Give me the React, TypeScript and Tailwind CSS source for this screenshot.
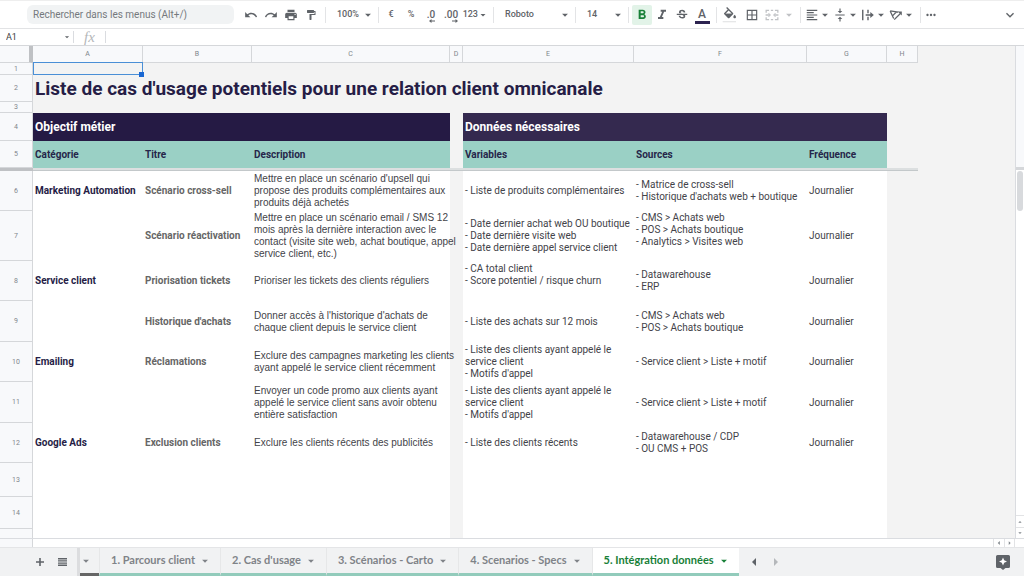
import type { ReactNode } from "react";
import {
  MdAdd,
  MdArrowDropDown,
  MdArrowDropUp,
  MdArrowLeft,
  MdArrowRight,
  MdBorderAll,
  MdExpandMore,
  MdFormatAlignLeft,
  MdFormatBold,
  MdFormatItalic,
  MdFormatPaint,
  MdMoreHoriz,
  MdPrint,
  MdRedo,
  MdStrikethroughS,
  MdUndo,
  MdVerticalAlignCenter,
} from "react-icons/md";

function Separator() {
  return <span className="ml-1 h-4 w-px shrink-0 bg-[#e3e4e6]" />;
}

function ToolButton({ label, children }: { label: string; children: ReactNode }) {
  return (
    <button type="button" aria-label={label} className="flex h-5 w-5 shrink-0 items-center justify-center">
      {children}
    </button>
  );
}

function MenuButton({ label, children }: { label: string; children: ReactNode }) {
  return (
    <button type="button" aria-label={label} className="flex h-5 w-7 shrink-0 items-center justify-center">
      {children}
      <MdArrowDropDown className="-ml-px size-3.5 shrink-0" />
    </button>
  );
}

function ToolSelect({ label, value, className }: { label: string; value: string; className: string }) {
  return (
    <span className={`relative flex h-5 shrink-0 items-center ${className}`}>
      <select aria-label={label} defaultValue={value} className="h-5 w-full appearance-none bg-transparent pl-[11px] text-[9px] font-medium">
        <option>{value}</option>
      </select>
      <MdArrowDropDown className="pointer-events-none absolute -right-px size-3.5" />
    </span>
  );
}

function DecimalIcon({ text, more }: { text: string; more: boolean }) {
  return (
    <span className="flex flex-col items-end pt-1">
      <span className="text-[10px] leading-[9px] font-medium">{text}</span>
      <svg viewBox="0 0 6 4" className="h-1 w-1.5" fill="currentColor">
        {more ? <path d="M0 1.5h3.5V0L6 2 3.5 4V2.500H0z" /> : <path d="M6 1.5H2.500V0L0 2l2.500 2V2.500H6z" />}
      </svg>
    </span>
  );
}

function FillIcon() {
  return (
    <svg viewBox="0 0 24 24" className="size-4" fill="currentColor">
      <path d="M16.560 8.940L7.620 0 6.210 1.410l2.380 2.380-5.150 5.150a1.490 1.490 0 0 0 0 2.120l5.500 5.500c.290.290.680.440 1.060.440s.770-.150 1.060-.440l5.500-5.500c.590-.580.590-1.530 0-2.120zM5.210 10L10 5.210 14.790 10H5.210zM19 11.500s-2 2.170-2 3.500c0 1.100.9 2 2 2s2-.9 2-2c0-1.330-2-3.500-2-3.500z" />
      <path d="M5 10h10l-5 6z" />
      <path d="M1 21h20v2H1z" fill="#e6e7e8" />
    </svg>
  );
}

function MergeIcon() {
  return (
    <svg viewBox="0 0 24 24" className="size-3.5" fill="none" stroke="currentColor" strokeWidth="2.2">
      <path d="M2 8V4h5M10 4h4M17 4h5v4M2 16v4h5M10 20h4M17 20h5v-4M1 12h7M23 12h-7" />
      <path d="M6 9l3 3-3 3M18 9l-3 3 3 3" strokeWidth="1.8" />
    </svg>
  );
}

function WrapIcon() {
  return (
    <svg viewBox="0 0 24 24" className="size-3.5" fill="none" stroke="currentColor" strokeWidth="2.4">
      <path d="M3 3v18M12 3v6M12 15v6M8 12h11" />
      <path d="M16 7l6 5-6 5z" fill="currentColor" stroke="none" />
    </svg>
  );
}

function RotateIcon() {
  return (
    <svg viewBox="0 0 24 24" className="size-3.5" fill="none" stroke="currentColor" strokeWidth="2.2">
      <path d="M2 5l14 2M2 5l6 13M13 6.500l-7 7" />
      <path d="M9 20L20 9" />
      <path d="M15 6h7v7z" fill="currentColor" stroke="none" />
    </svg>
  );
}

function Toolbar() {
  return (
    <div role="toolbar" className="flex h-[29px] shrink-0 items-center border-t border-b border-t-[#eeeeee] border-b-[#e2e3e5] text-[#5f6368]">
      <input
        aria-label="Rechercher dans les menus"
        placeholder="Rechercher dans les menus (Alt+/)"
        className="mr-[7px] ml-[27px] h-[19px] w-[207px] shrink-0 rounded-md bg-[#f1f3f4] px-1.5 text-[10px] placeholder:text-[#75797d]"
      />
      <ToolButton label="Annuler"><MdUndo className="size-3.5" /></ToolButton>
      <ToolButton label="Rétablir"><MdRedo className="size-3.5" /></ToolButton>
      <ToolButton label="Imprimer"><MdPrint className="size-3.5" /></ToolButton>
      <ToolButton label="Copier la mise en forme"><MdFormatPaint className="size-3" /></ToolButton>
      <Separator />
      <ToolSelect label="Zoom" value="100%" className="w-[48px]" />
      <Separator />
      <div className="flex pl-0.5 text-[9px] font-medium">
        <ToolButton label="Format monétaire">€</ToolButton>
        <ToolButton label="Pourcentage">%</ToolButton>
        <ToolButton label="Moins de décimales"><DecimalIcon text=".0" more={false} /></ToolButton>
        <ToolButton label="Plus de décimales"><DecimalIcon text=".00" more /></ToolButton>
        <button type="button" className="flex h-5 w-7 shrink-0 items-center justify-end">
          123
          <MdArrowDropDown className="-ml-px size-3 shrink-0" />
        </button>
      </div>
      <Separator />
      <ToolSelect label="Police" value="Roboto" className="w-[77px]" />
      <Separator />
      <ToolSelect label="Taille de police" value="14" className="w-[48px]" />
      <Separator />
      <div className="flex pl-[3px]">
        <button type="button" aria-label="Gras" aria-pressed="true" className="flex h-5 w-5 items-center justify-center rounded-xs bg-[#e2f3e8] text-[#188038]">
          <MdFormatBold className="size-4" />
        </button>
        <ToolButton label="Italique"><MdFormatItalic className="size-4" /></ToolButton>
        <ToolButton label="Barré"><MdStrikethroughS className="size-3.5" /></ToolButton>
        <ToolButton label="Couleur du texte">
          <span className="flex flex-col items-center pt-0.5">
            <span className="text-[12px] leading-[13px] font-medium">A</span>
            <span className="h-[3px] w-[15px] bg-[#2c2350]" />
          </span>
        </ToolButton>
      </div>
      <Separator />
      <div className="flex gap-0.5 pl-[3px]">
        <ToolButton label="Couleur de remplissage"><FillIcon /></ToolButton>
        <ToolButton label="Bordures"><MdBorderAll className="size-3.5" /></ToolButton>
        <button type="button" aria-label="Fusionner" disabled className="flex h-5 w-8 items-center justify-center gap-[3px] text-[#c0c2c5]">
          <MergeIcon />
          <MdArrowDropDown className="size-3.5 shrink-0" />
        </button>
      </div>
      <Separator />
      <div className="flex pl-[3px]">
        <MenuButton label="Alignement horizontal"><MdFormatAlignLeft className="size-3.5" /></MenuButton>
        <MenuButton label="Alignement vertical"><MdVerticalAlignCenter className="size-3.5" /></MenuButton>
        <MenuButton label="Retour à la ligne"><WrapIcon /></MenuButton>
        <MenuButton label="Rotation du texte"><RotateIcon /></MenuButton>
      </div>
      <Separator />
      <button type="button" aria-label="Plus" className="flex h-5 w-5 items-center justify-center"><MdMoreHoriz className="size-3.5" /></button>
      <button type="button" aria-label="Masquer les menus" className="ml-auto flex h-5 w-7 items-center justify-center"><MdExpandMore className="size-4" /></button>
    </div>
  );
}

function FormulaBar() {
  return (
    <div className="flex h-[17px] shrink-0 items-center border-b border-[#d5d7da] text-[#3c4043]">
      <input aria-label="Zone de nom" defaultValue="A1" className="h-4 w-[60px] pl-1.5 text-[9px]" />
      <button type="button" aria-label="Plages nommées" className="flex w-[13px] justify-center"><MdArrowDropDown className="size-2.5 text-[#5f6368]" /></button>
      <span className="h-3 w-px bg-[#dadce0]" />
      <label htmlFor="formula" className="w-[31px] text-center font-['Liberation_Serif',serif] text-[15px] leading-[14px] text-[#b4b7ba] italic">fx</label>
      <span className="h-3 w-px bg-[#dadce0]" />
      <input id="formula" className="h-4 min-w-0 flex-1 px-2 text-[9px]" />
    </div>
  );
}

type Row = {
  n: number;
  height: string;
  category?: string;
  title?: string;
  description?: string;
  variables?: string;
  sources?: string;
  frequency?: string;
};

const rows: Row[] = [
  {
    n: 6,
    height: "h-[40px]",
    category: "Marketing Automation",
    title: "Scénario cross-sell",
    description: "Mettre en place un scénario d'upsell qui\npropose des produits complémentaires aux\nproduits déjà achetés",
    variables: "- Liste de produits complémentaires",
    sources: "- Matrice de cross-sell\n- Historique d'achats web + boutique",
    frequency: "Journalier",
  },
  {
    n: 7,
    height: "h-[50px]",
    title: "Scénario réactivation",
    description: "Mettre en place un scénario email / SMS 12\nmois après la dernière interaction avec le\ncontact (visite site web, achat boutique, appel\nservice client, etc.)",
    variables: "- Date dernier achat web OU boutique\n- Date dernière visite web\n- Date dernière appel service client",
    sources: "- CMS > Achats web\n- POS > Achats boutique\n- Analytics > Visites web\n ",
    frequency: "Journalier",
  },
  {
    n: 8,
    height: "h-[40px]",
    category: "Service client",
    title: "Priorisation tickets",
    description: "Prioriser les tickets des clients réguliers",
    variables: "- CA total client\n- Score potentiel / risque churn\n ",
    sources: "- Datawarehouse\n- ERP",
    frequency: "Journalier",
  },
  {
    n: 9,
    height: "h-[41px]",
    title: "Historique d'achats",
    description: "Donner accès à l'historique d'achats de\nchaque client depuis le service client",
    variables: "- Liste des achats sur 12 mois",
    sources: "- CMS > Achats web\n- POS > Achats boutique",
    frequency: "Journalier",
  },
  {
    n: 10,
    height: "h-[40px]",
    category: "Emailing",
    title: "Réclamations",
    description: "Exclure des campagnes marketing les clients\nayant appelé le service client récemment",
    variables: "- Liste des clients ayant appelé le\nservice client\n- Motifs d'appel",
    sources: "- Service client > Liste + motif",
    frequency: "Journalier",
  },
  {
    n: 11,
    height: "h-[41px]",
    description: "Envoyer un code promo aux clients ayant\nappelé le service client sans avoir obtenu\nentière satisfaction",
    variables: "- Liste des clients ayant appelé le\nservice client\n- Motifs d'appel",
    sources: "- Service client > Liste + motif",
    frequency: "Journalier",
  },
  {
    n: 12,
    height: "h-[40px]",
    category: "Google Ads",
    title: "Exclusion clients",
    description: "Exclure les clients récents des publicités",
    variables: "- Liste des clients récents",
    sources: "- Datawarehouse / CDP\n- OU CMS + POS",
    frequency: "Journalier",
  },
  { n: 13, height: "h-[34px]" },
  { n: 14, height: "h-[32px]" },
];

function RowNumber({ n }: { n?: number }) {
  return (
    <th scope="row" className="border-r border-b border-[#d5d7da] bg-[#f8f9fb] text-center text-[7px] leading-[8px] font-normal text-[#80868b]">
      {n}
    </th>
  );
}

function Sheet() {
  return (
    <table className="w-[918px] table-fixed border-separate border-spacing-0 text-[10px] leading-[12px] whitespace-pre text-[#434349] [&_td]:pl-0.5">
      <colgroup>
        <col className="w-[33px]" />
        <col className="w-[110px]" />
        <col className="w-[109px]" />
        <col className="w-[198px]" />
        <col className="w-[13px]" />
        <col className="w-[171px]" />
        <col className="w-[173px]" />
        <col className="w-[80px]" />
        <col className="w-[31px]" />
      </colgroup>
      <thead>
        <tr className="h-[17px]">
          <th className="border-r-4 border-b border-r-[#bfc1c4] border-b-[#d5d7da] bg-[#f8f9fb]" />
          {["A", "B", "C", "D", "E", "F", "G", "H"].map((letter) => (
            <th key={letter} scope="col" className="border-r border-b border-[#d5d7da] bg-[#f8f9fb] text-center text-[7px] leading-[8px] font-normal text-[#80868b]">
              {letter}
            </th>
          ))}
        </tr>
      </thead>
      <tbody>
        <tr className="h-[12px]">
          <RowNumber n={1} />
          <td className="relative">
            <span className="absolute -top-px right-0 bottom-0 left-0 border border-[#4a8fd6]" />
            <span className="absolute -right-px -bottom-0.5 size-[5px] bg-[#1967d2]" />
          </td>
          <td colSpan={7} />
        </tr>
        <tr className="h-[27px]">
          <RowNumber n={2} />
          <td colSpan={8} className="text-[19px] leading-[22px] font-bold text-[#261d46]">
            Liste de cas d'usage potentiels pour une relation client omnicanale
          </td>
        </tr>
        <tr className="h-[11px]">
          <RowNumber n={3} />
          <td colSpan={8} />
        </tr>
        <tr className="h-[28px] text-[12px] font-bold text-white">
          <RowNumber n={4} />
          <td colSpan={3} className="bg-[#251a44]">Objectif métier</td>
          <td />
          <td colSpan={3} className="bg-[#34294f]">Données nécessaires</td>
          <td />
        </tr>
        <tr className="h-[27px] font-bold text-[#26264a] [&_td]:bg-[#9ad0c5]">
          <RowNumber n={5} />
          <td>Catégorie</td>
          <td>Titre</td>
          <td>Description</td>
          <td className="bg-[#f3f3f3]!" />
          <td>Variables</td>
          <td>Sources</td>
          <td>Fréquence</td>
          <td className="bg-[#f3f3f3]!" />
        </tr>
        <tr className="h-[3px]">
          <th className="bg-[#bfc1c4]" />
          <td colSpan={8} className="border-b border-[#c3c8ca] bg-[#dcdfe0]" />
        </tr>
        {rows.map((row) => (
          <tr key={row.n} className={`${row.height} [&_td]:bg-white`}>
            <RowNumber n={row.n} />
            <td className="font-bold text-[#261d46]">{row.category}</td>
            <td className="font-bold text-[#666666]">{row.title}</td>
            <td className="font-['Liberation_Sans',Arial,sans-serif]">{row.description}</td>
            <td className="bg-[#f3f3f3]!" />
            <td>{row.variables}</td>
            <td>{row.sources}</td>
            <td>{row.frequency}</td>
            <td className="bg-[#f3f3f3]!" />
          </tr>
        ))}
        <tr className="h-8 [&_td]:bg-white">
          <RowNumber />
          <td colSpan={3} />
          <td className="bg-[#f3f3f3]!" />
          <td colSpan={3} />
          <td className="bg-[#f3f3f3]!" />
        </tr>
      </tbody>
    </table>
  );
}

function VerticalScroll() {
  return (
    <div className="flex w-[9px] shrink-0 flex-col border-l border-[#dadce0] bg-white text-[#80868b]">
      <div className="h-[121px] shrink-0 bg-[#f8f9fb]" />
      <div className="h-[3px] shrink-0 bg-[#d5d7da]" />
      <div className="mx-px mt-px h-[40px] shrink-0 rounded-full bg-[#d8dadd]" />
      <button type="button" aria-label="Défiler vers le haut" className="mt-auto flex h-[12px] shrink-0 items-center justify-center border-t border-[#e2e3e5]">
        <MdArrowDropUp className="size-2.5" />
      </button>
      <button type="button" aria-label="Défiler vers le bas" className="flex h-[11px] shrink-0 items-center justify-center border-t border-[#e2e3e5]">
        <MdArrowDropDown className="size-2.5" />
      </button>
    </div>
  );
}

function HorizontalScroll() {
  return (
    <div className="flex h-[9px] shrink-0 border-t border-[#dadce0] bg-white text-[#80868b]">
      <div className="w-[33px] border-r border-[#d5d7da] bg-[#f8f9fb]" />
      <button type="button" aria-label="Défiler vers la gauche" className="ml-auto flex w-[11px] items-center justify-center border-l border-[#e2e3e5]">
        <MdArrowLeft className="size-2.5" />
      </button>
      <button type="button" aria-label="Défiler vers la droite" className="mr-[9px] flex w-[11px] items-center justify-center border-x border-[#e2e3e5]">
        <MdArrowRight className="size-2.5" />
      </button>
    </div>
  );
}

const tabs = ["1. Parcours client", "2. Cas d'usage", "3. Scénarios - Carto", "4. Scenarios - Specs", "5. Intégration données"];

function TabStrip() {
  return (
    <nav aria-label="Feuilles" className="flex h-[29px] shrink-0 items-stretch border-t border-[#e4e5e7] bg-[#f1f2f3] font-['Lato',sans-serif] text-[11px] text-[#7f8388]">
      <button type="button" aria-label="Ajouter une feuille" className="ml-[29px] flex w-[22px] items-center justify-center text-[#5f6368]">
        <svg viewBox="0 0 8 8" className="size-2" fill="currentColor">
          <path d="M3.200 0h1.600v3.200H8v1.600H4.800V8H3.200V4.800H0V3.200h3.200z" />
        </svg>
      </button>
      <button type="button" aria-label="Toutes les feuilles" className="flex w-[22px] items-center justify-center text-[#5f6368]">
        <svg viewBox="0 0 9 8" className="h-2 w-[9px]" fill="currentColor">
          <path d="M0 0h9v1.400H0zM0 2.200h9v1.400H0zM0 4.400h9v1.400H0zM0 6.600h9V8H0z" />
        </svg>
      </button>
      <span className="ml-1 w-[3px] bg-[#dcdddf]" />
      <button type="button" aria-label="Feuille précédente" className="flex w-[19px] items-center border-b-3 border-[#666666]"><MdArrowDropDown className="-ml-px size-3.5" /></button>
      {tabs.map((tab, index) => (
        <button
          key={tab}
          type="button"
          aria-current={index === 4 ? "page" : undefined}
          className="flex items-center gap-[3px] border-b-3 border-l border-b-[#92cbbb] border-l-[#e6e7e8] pr-2 pl-[11px] font-bold whitespace-nowrap aria-[current=page]:bg-white aria-[current=page]:text-[#188038]"
        >
          {tab}
          <MdArrowDropDown className="size-3.5" />
        </button>
      ))}
      <button type="button" aria-label="Onglets précédents" className="ml-1 flex w-[22px] items-center justify-center text-[#5f6368]">
        <svg viewBox="0 0 4 8" className="h-2 w-1" fill="currentColor"><path d="M4 0v8L0 4z" /></svg>
      </button>
      <button type="button" aria-label="Onglets suivants" className="flex w-[22px] items-center justify-center text-[#b5b8bb]">
        <svg viewBox="0 0 4 8" className="h-2 w-1" fill="currentColor"><path d="M0 0v8l4-4z" /></svg>
      </button>
      <button type="button" aria-label="Explorer" className="mr-[14px] ml-auto flex items-center text-[#5f6368]">
        <svg viewBox="0 0 14 15" className="h-[15px] w-[14px]">
          <path d="M1.500 0h11A1.500 1.500 0 0 1 14 1.500v10a1.500 1.500 0 0 1-1.500 1.500H9.500L7 15l-2.500-2H1.500A1.500 1.500 0 0 1 0 11.500v-10A1.500 1.500 0 0 1 1.500 0z" fill="currentColor" />
          <path d="M7 2.500l1.200 2.800L11 6.500 8.200 7.700 7 10.500 5.800 7.700 3 6.500l2.800-1.200z" fill="white" />
        </svg>
      </button>
    </nav>
  );
}

export default function App() {
  return (
    <div className="flex h-screen flex-col overflow-hidden bg-white font-['Roboto',sans-serif]">
      <Toolbar />
      <FormulaBar />
      <main className="flex min-h-0 flex-1">
        <div className="min-w-0 flex-1 overflow-hidden bg-[#f3f3f3]">
          <Sheet />
        </div>
        <VerticalScroll />
      </main>
      <HorizontalScroll />
      <TabStrip />
    </div>
  );
}
